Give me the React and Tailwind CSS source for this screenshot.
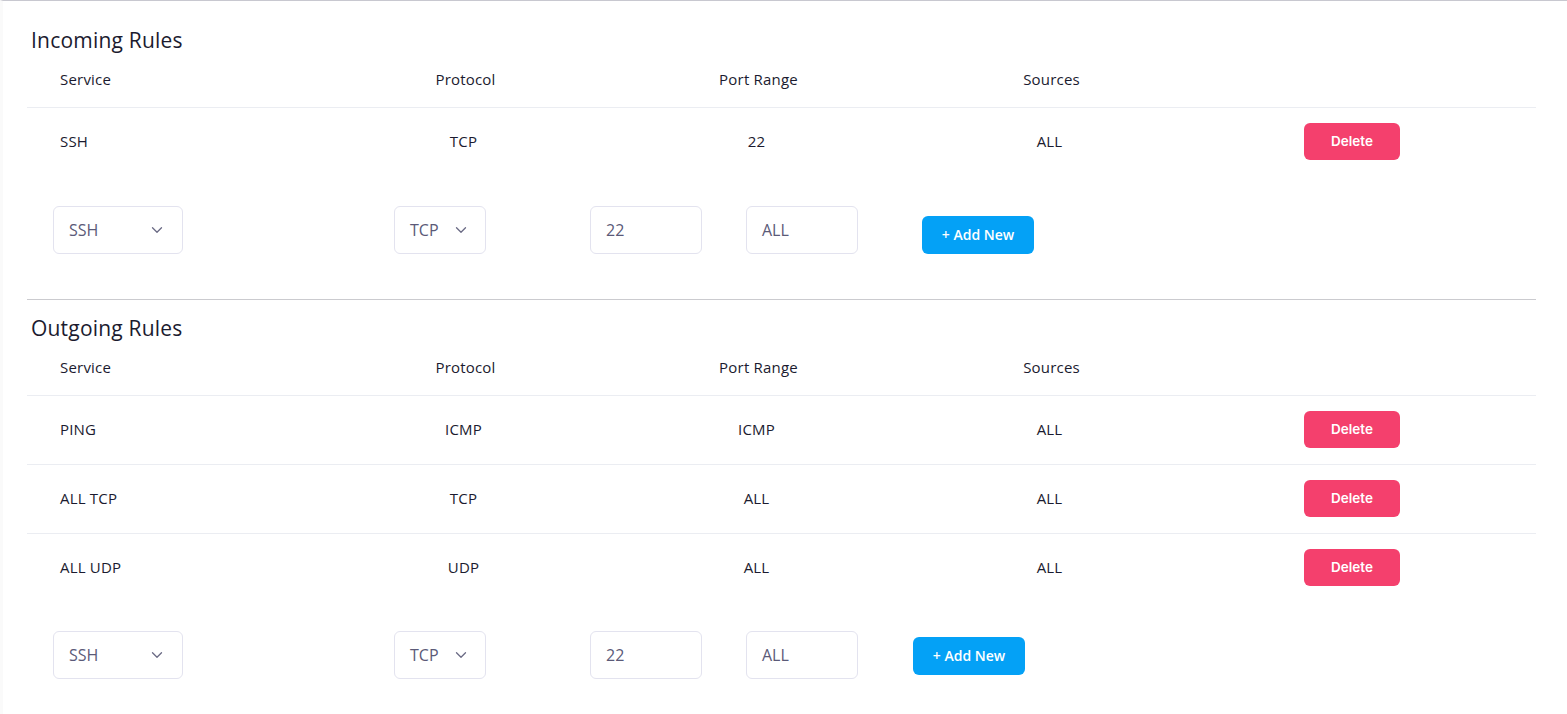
import { ChevronDown } from 'lucide-react';

const incoming = [{ id: 1, service: 'SSH', protocol: 'TCP', port: '22', source: 'ALL' }];

const outgoing = [
  { id: 1, service: 'PING', protocol: 'ICMP', port: 'ICMP', source: 'ALL' },
  { id: 2, service: 'ALL TCP', protocol: 'TCP', port: 'ALL', source: 'ALL' },
  { id: 3, service: 'ALL UDP', protocol: 'UDP', port: 'ALL', source: 'ALL' },
];

const cols = 'grid grid-cols-[290px_293px_293px_293px_1fr] items-center';

function RuleTable({ rules }) {
  return (
    <div className="text-[15px] tracking-[0.2px] text-[#1b1b2f]">
      <div className={`${cols} h-[53px] pb-[2px]`}>
        <div className="pl-[33px]">Service</div>
        <div className="text-center pl-[4px]">Protocol</div>
        <div className="text-center pl-[4px]">Port Range</div>
        <div className="text-center pl-[4px]">Sources</div>
        <div />
      </div>
      {rules.map((r) => (
        <div key={r.id} className={`${cols} h-[69px] border-t border-[#ebedf2] pb-[2px]`}>
          <div className="pl-[33px]">{r.service}</div>
          <div className="text-center">{r.protocol}</div>
          <div className="text-center">{r.port}</div>
          <div className="text-center">{r.source}</div>
          <div className="pl-[108px]">
            <button
              type="button"
              className="w-[96px] h-[37px] rounded-md bg-[#f4406d] text-white text-[13.5px] tracking-normal font-semibold font-['Inter',sans-serif]"
            >
              Delete
            </button>
          </div>
        </div>
      ))}
    </div>
  );
}

function AddRow({ btnGap, align }) {
  return (
    <div className={`flex ${align} text-[16px] text-[#5b5a78]`}>
      <div className="ml-[26px] w-[130px] h-[48px] border border-[#e3e3ef] rounded-md flex items-center justify-between pl-[15px] pr-[16px]">
        <span>SSH</span>
        <ChevronDown size={18} strokeWidth={1.75} className="text-[#6b6b85]" />
      </div>
      <div className="ml-[211px] w-[92px] h-[48px] border border-[#e3e3ef] rounded-md flex items-center justify-between pl-[15px] pr-[15px]">
        <span>TCP</span>
        <ChevronDown size={18} strokeWidth={1.75} className="text-[#6b6b85]" />
      </div>
      <div className="ml-[104px] w-[112px] h-[48px] border border-[#e3e3ef] rounded-md flex items-center pl-[15px]">
        22
      </div>
      <div className="ml-[44px] w-[112px] h-[48px] border border-[#e3e3ef] rounded-md flex items-center pl-[15px]">
        ALL
      </div>
      <button
        type="button"
        className={`${btnGap} w-[112px] h-[38px] rounded-md bg-[#04a1f6] text-white text-[14px] font-semibold pb-[2px]`}
      >
        + Add New
      </button>
    </div>
  );
}

export default function App() {
  return (
    <div className="min-h-[714px] bg-white border-t border-[#c8c8d0] font-['Open_Sans',sans-serif] border-l-[3px] border-l-[#fafafa]">
      <div className="pl-[24px] pr-[31px]">
        {/* Incoming */}
        <h2 className="pt-[25px] pl-[4px] text-[21px] tracking-[0.2px] leading-[28px] text-[#1b1b2f]">Incoming Rules</h2>
        <RuleTable rules={incoming} />
        <div className="mt-[30px]">
          <AddRow btnGap="ml-[64px]" align="items-end" />
        </div>

        <div className="mt-[45px] border-t border-[#cbcbcf]" />

        {/* Outgoing */}
        <h2 className="pt-[14px] pl-[4px] text-[21px] tracking-[0.2px] leading-[28px] text-[#1b1b2f]">Outgoing Rules</h2>
        <RuleTable rules={outgoing} />
        <div className="mt-[29px]">
          <AddRow btnGap="ml-[55px] mt-[6px]" align="items-start" />
        </div>
      </div>
    </div>
  );
}
